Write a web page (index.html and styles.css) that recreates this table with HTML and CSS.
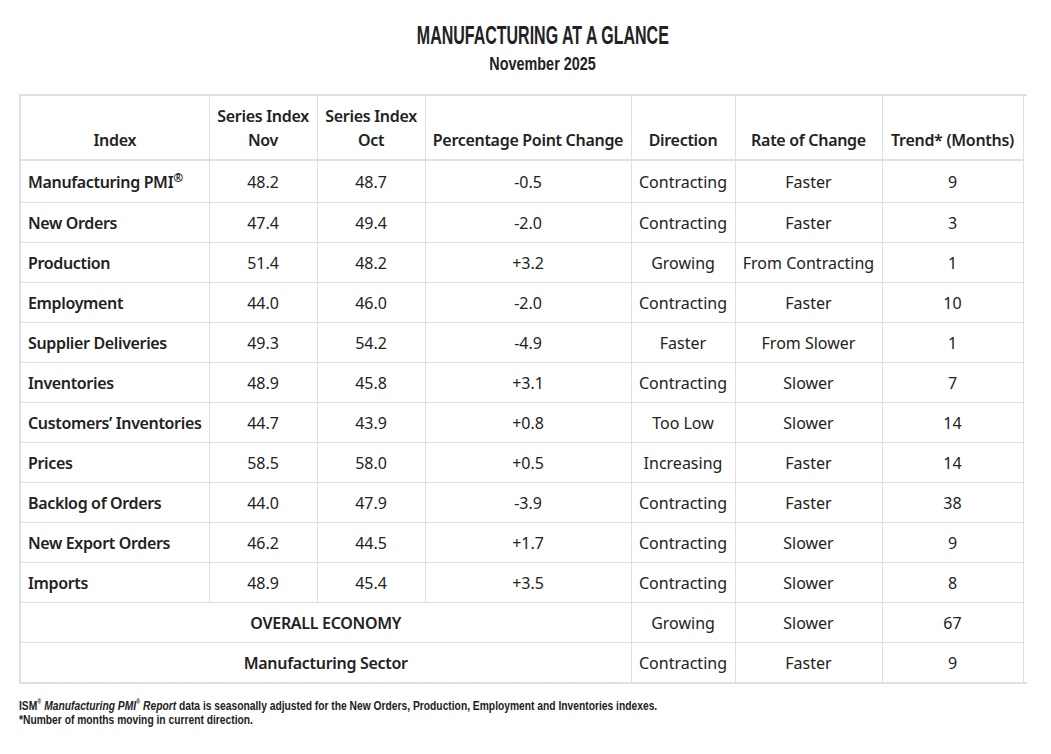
FILE: index.html
```html
<!DOCTYPE html>
<html lang="en">
<head>
<meta charset="utf-8">
<title>Manufacturing at a Glance</title>
<link rel="stylesheet" href="styles.css">
</head>
<body>
<div class="page">
  <div class="head">
    <h1 class="title"><span class="narrow">MANUFACTURING AT A GLANCE</span></h1>
    <div class="subtitle"><span class="narrow-sub">November 2025</span></div>
  </div>
  <div class="frame">
    <table class="glance">
      <colgroup>
        <col class="c1"><col class="c2"><col class="c3"><col class="c4"><col class="c5"><col class="c6"><col class="c7">
      </colgroup>
      <thead>
        <tr>
          <th>Index</th>
          <th>Series Index<br>Nov</th>
          <th>Series Index<br>Oct</th>
          <th>Percentage Point Change</th>
          <th>Direction</th>
          <th>Rate of Change</th>
          <th>Trend* (Months)</th>
        </tr>
      </thead>
      <tbody>
        <tr class="first"><td class="name">Manufacturing PMI<sup>®</sup></td><td>48.2</td><td>48.7</td><td>-0.5</td><td>Contracting</td><td>Faster</td><td>9</td></tr>
        <tr><td class="name">New Orders</td><td>47.4</td><td>49.4</td><td>-2.0</td><td>Contracting</td><td>Faster</td><td>3</td></tr>
        <tr><td class="name">Production</td><td>51.4</td><td>48.2</td><td>+3.2</td><td>Growing</td><td>From Contracting</td><td>1</td></tr>
        <tr><td class="name">Employment</td><td>44.0</td><td>46.0</td><td>-2.0</td><td>Contracting</td><td>Faster</td><td>10</td></tr>
        <tr><td class="name">Supplier Deliveries</td><td>49.3</td><td>54.2</td><td>-4.9</td><td>Faster</td><td>From Slower</td><td>1</td></tr>
        <tr><td class="name">Inventories</td><td>48.9</td><td>45.8</td><td>+3.1</td><td>Contracting</td><td>Slower</td><td>7</td></tr>
        <tr><td class="name">Customers’ Inventories</td><td>44.7</td><td>43.9</td><td>+0.8</td><td>Too Low</td><td>Slower</td><td>14</td></tr>
        <tr><td class="name">Prices</td><td>58.5</td><td>58.0</td><td>+0.5</td><td>Increasing</td><td>Faster</td><td>14</td></tr>
        <tr><td class="name">Backlog of Orders</td><td>44.0</td><td>47.9</td><td>-3.9</td><td>Contracting</td><td>Faster</td><td>38</td></tr>
        <tr><td class="name">New Export Orders</td><td>46.2</td><td>44.5</td><td>+1.7</td><td>Contracting</td><td>Slower</td><td>9</td></tr>
        <tr><td class="name">Imports</td><td>48.9</td><td>45.4</td><td>+3.5</td><td>Contracting</td><td>Slower</td><td>8</td></tr>
        <tr><td class="span" colspan="4">OVERALL ECONOMY</td><td>Growing</td><td>Slower</td><td>67</td></tr>
        <tr><td class="span" colspan="4">Manufacturing Sector</td><td>Contracting</td><td>Faster</td><td>9</td></tr>
      </tbody>
    </table>
  </div>
  <div class="notes">
    <p>ISM<sup>®</sup> <em>Manufacturing PMI<sup>®</sup> Report</em> data is seasonally adjusted for the New Orders, Production, Employment and Inventories indexes.</p>
    <p>*Number of months moving in current direction.</p>
  </div>
</div>
</body>
</html>
```

FILE: styles.css
```css
html, body {
  margin: 0;
  padding: 0;
  background: #ffffff;
}

body {
  color: #222222;
  font-family: "Noto Sans", "Open Sans", sans-serif;
}

.page {
  width: 1008px;
  padding: 20px 0 0 19px;
}

.head {
  text-align: center;
  padding-left: 40px;
}

.title {
  margin: 0;
  font-family: "Liberation Sans", Arial, sans-serif;
  font-size: 26px;
  line-height: 30px;
  font-weight: 700;
  color: #222222;
}

.narrow {
  display: inline-block;
  transform: scaleX(0.615);
}

.subtitle {
  margin-top: 3px;
  font-family: "Liberation Sans", Arial, sans-serif;
  font-size: 18px;
  line-height: 22px;
  font-weight: 700;
  color: #222222;
}

.narrow-sub {
  display: inline-block;
  transform: scaleX(0.8);
}

.frame {
  margin-top: 19px;
  border-top: 2px solid #dfe0e4;
  border-left: 2px solid #dfe0e4;
  border-bottom: 2px solid #dfe0e4;
}

.glance {
  width: 1002px;
  border-collapse: collapse;
  table-layout: fixed;
  font-size: 16px;
}

.c1 { width: 188px; }
.c2 { width: 108px; }
.c3 { width: 108px; }
.c4 { width: 206px; }
.c5 { width: 104px; }
.c6 { width: 147px; }
.c7 { width: 141px; }

.glance th,
.glance td {
  border: 1px solid #dfe0e4;
  text-align: center;
  padding: 0 2px;
  white-space: nowrap;
}

.glance tr > :first-child { border-left: none; }
.glance thead tr > * { border-top: none; }
.glance tbody tr:last-child > * { border-bottom: none; }

.glance th {
  font-weight: 600;
  letter-spacing: -0.3px;
  line-height: 24px;
  height: 64px;
  vertical-align: bottom;
  padding-bottom: 7px;
  box-sizing: border-box;
  border-bottom: 2px solid #dfe0e4;
}

.glance td {
  height: 39px;
  line-height: 22px;
  vertical-align: middle;
}

.glance tr.first td { height: 41px; }

.glance td.name {
  text-align: left;
  padding-left: 7px;
  font-weight: 600;
  letter-spacing: -0.35px;
}

.glance td.span {
  font-weight: 600;
  letter-spacing: -0.3px;
}

.glance sup {
  font-size: 12px;
  line-height: 0;
  vertical-align: 6px;
  font-weight: 700;
}

.notes {
  margin-top: 15px;
  font-family: "Liberation Sans", Arial, sans-serif;
  font-size: 13px;
  line-height: 14px;
  font-weight: 700;
  color: #222222;
  transform: scaleX(0.79);
  transform-origin: left top;
  width: 1280px;
}

.notes p {
  margin: 0;
}

.notes em {
  font-style: italic;
}

.notes sup {
  font-size: 7px;
  line-height: 0;
  vertical-align: 6px;
}
```
